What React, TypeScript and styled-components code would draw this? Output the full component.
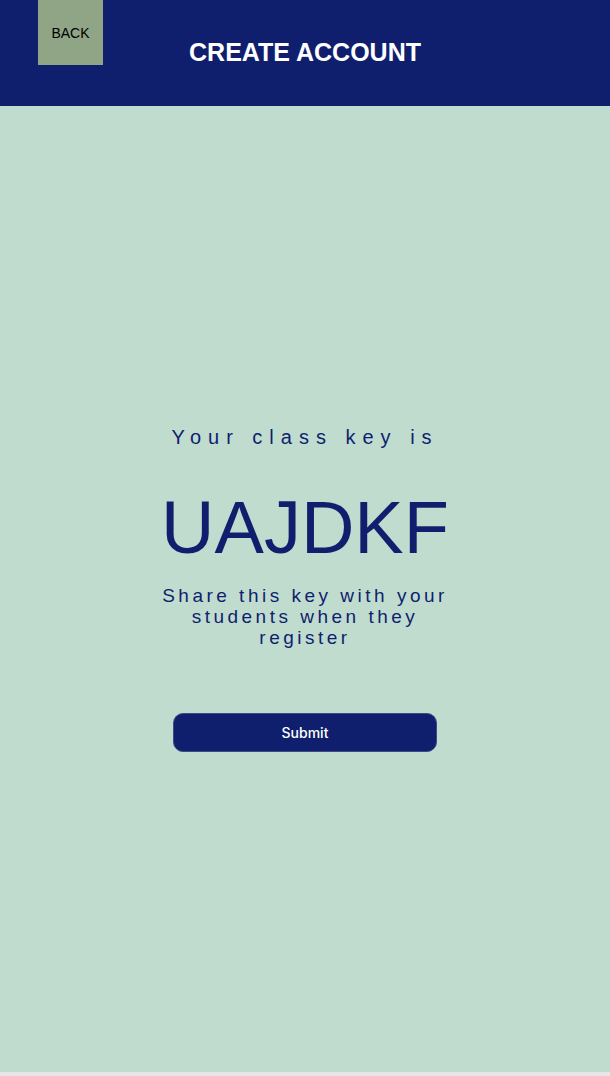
import React from "react";
import styled, { createGlobalStyle } from "styled-components";

const GlobalStyle = createGlobalStyle`
  html, body {
    margin: 0;
    padding: 0;
    background: #e6e6e6;
  }
  * { box-sizing: border-box; }
`;

const Page = styled.div`
  display: flex;
  flex-direction: column;
  height: 1072px;
  background: #c0dcce;
  font-family: "Liberation Sans", Arial, sans-serif;
`;

const Header = styled.header`
  position: relative;
  height: 106px;
  flex-shrink: 0;
  background: #0f1f6e;
  display: flex;
  justify-content: center;
  align-items: flex-start;
`;

const BackButton = styled.button`
  position: absolute;
  left: 38px;
  top: 0;
  width: 65px;
  height: 65px;
  border: none;
  padding: 0;
  background: #8fa586;
  color: #000;
  font-family: "Liberation Sans", Arial, sans-serif;
  font-size: 14px;
  cursor: pointer;
`;

const Title = styled.h1`
  margin: 38px 0 0;
  color: #fff;
  font-size: 25px;
  font-weight: 700;
  line-height: 29px;
`;

const Main = styled.main`
  flex: 1;
  display: flex;
  flex-direction: column;
  align-items: center;
  justify-content: center;
  color: #0f1f6e;
  text-align: center;
`;

const Intro = styled.p`
  margin: 0;
  font-size: 20px;
  line-height: 23px;
  letter-spacing: 7px;
`;

const Key = styled.div`
  margin-top: 36px;
  font-size: 74px;
  line-height: 85px;
`;

const Note = styled.p`
  margin: 15px 0 0;
  width: 300px;
  font-size: 19px;
  line-height: 21px;
  letter-spacing: 3.5px;
`;

const SubmitButton = styled.button`
  margin-top: 65px;
  width: 264px;
  height: 39px;
  border-radius: 10px;
  border: 1px solid #3c4a86;
  background: #0f1f6e;
  color: #fff;
  font-family: Inter, "Liberation Sans", sans-serif;
  font-size: 14px;
  font-weight: 500;
  cursor: pointer;
`;

export default function App() {
  return (
    <>
      <GlobalStyle />
      <Page>
        <Header>
          <BackButton>BACK</BackButton>
          <Title>CREATE ACCOUNT</Title>
        </Header>
        <Main>
          <Intro>Your class key is</Intro>
          <Key>UAJDKF</Key>
          <Note>Share this key with your students when they register</Note>
          <SubmitButton>Submit</SubmitButton>
        </Main>
      </Page>
    </>
  );
}
